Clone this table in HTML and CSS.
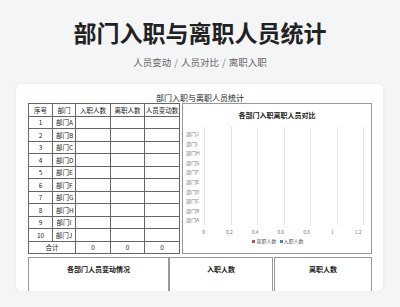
FILE: index.html
```html
<!DOCTYPE html>
<html lang="zh">
<head>
  <meta charset="UTF-8" />
  <title>部门入职与离职人员统计</title>
  <link rel="stylesheet" href="styles.css">
</head>
<body>

  <header class="top">
    <h1>部门入职与离职人员统计</h1>
    <div class="crumbs">
      <span>人员变动</span><span class="sep">/</span><span>人员对比</span><span class="sep">/</span><span>离职入职</span>
    </div>
  </header>

  <div class="card">
    <div class="caption">部门入职与离职人员统计</div>

    <div class="sheet">
      <table class="stats">
        <colgroup>
          <col style="width:24px"><col style="width:23px"><col style="width:35px"><col style="width:34px"><col style="width:35px">
        </colgroup>
        <tr><td>序号</td><td>部门</td><td>入职人数</td><td>离职人数</td><td>人员变动数</td></tr>
        <tr><td>1</td><td class="dept">部门A</td><td></td><td></td><td></td></tr>
        <tr><td>2</td><td class="dept">部门B</td><td></td><td></td><td></td></tr>
        <tr><td>3</td><td class="dept">部门C</td><td></td><td></td><td></td></tr>
        <tr><td>4</td><td class="dept">部门D</td><td></td><td></td><td></td></tr>
        <tr><td>5</td><td class="dept">部门E</td><td></td><td></td><td></td></tr>
        <tr><td>6</td><td class="dept">部门F</td><td></td><td></td><td></td></tr>
        <tr><td>7</td><td class="dept">部门G</td><td></td><td></td><td></td></tr>
        <tr><td>8</td><td class="dept">部门H</td><td></td><td></td><td></td></tr>
        <tr><td>9</td><td>部门I</td><td></td><td></td><td></td></tr>
        <tr><td>10</td><td>部门J</td><td></td><td></td><td></td></tr>
        <tr><td colspan="2">合计</td><td>0</td><td>0</td><td>0</td></tr>
      </table>

      <div class="chart">
        <div class="chart-title">各部门入职离职人员对比</div>
        <div class="plot">
          <div class="ylabels">
            <span>部门J</span><span>部门I</span><span>部门H</span><span>部门G</span><span>部门F</span>
            <span>部门E</span><span>部门D</span><span>部门C</span><span>部门B</span><span>部门A</span>
          </div>
          <div class="grid">
            <span></span><span></span><span></span><span></span><span></span><span></span>
          </div>
        </div>
        <div class="xlabels">
          <span>0</span><span>0.2</span><span>0.4</span><span>0.6</span><span>0.8</span><span>1</span><span>1.2</span>
        </div>
        <div class="legend">
          <i class="dot red"></i>离职人数 <i class="dot blue"></i>入职人数
        </div>
      </div>
    </div>

    <div class="bottom">
      <div class="box wide">各部门人员变动情况</div>
      <div class="box mid">入职人数</div>
      <div class="box last">离职人数</div>
    </div>
  </div>

</body>
</html>
```

FILE: styles.css
```css
body {
  margin: 0;
  background: #f4f5f7;
  font-family: 'Noto Sans CJK SC', 'Noto Sans', sans-serif;
  color: #222;
}
.top {
  text-align: center;
  padding-top: 17px;
}
h1 {
  margin: 0;
  font-size: 23px;
  line-height: 30px;
  font-weight: 700;
  color: #222;
}
.crumbs {
  margin-top: 8px;
  font-size: 9.5px;
  line-height: 14px;
  color: #666;
}
.crumbs .sep {
  margin: 0 3px;
  color: #888;
}
.card {
  margin: 15px 17px 0 16px;
  height: 207px;
  background: #fff;
  border-radius: 6px;
  box-shadow: 0 1px 4px rgba(0,0,0,0.07);
  padding: 8px 11px 0 12px;
  box-sizing: border-box;
  overflow: hidden;
}
.caption {
  text-align: center;
  font-size: 8px;
  line-height: 11px;
  color: #222;
}
.sheet {
  display: flex;
  gap: 2px;
  height: 151px;
}
.stats {
  border-collapse: collapse;
  table-layout: fixed;
  width: 151px;
  height: 151px;
  font-size: 6.5px;
  color: #222;
}
.stats td {
  border: 1px solid #666;
  text-align: center;
  padding: 0;
  height: 11px;
  line-height: 8px;
  white-space: nowrap;
  overflow: hidden;
}
.stats td.dept {
  text-align: left;
  padding-left: 3px;
}
.chart {
  width: 190px;
  border: 1px solid #999;
  box-sizing: border-box;
  display: flex;
  flex-direction: column;
}
.chart-title {
  margin-top: 6px;
  text-align: center;
  font-size: 7px;
  line-height: 10px;
  font-weight: 700;
}
.plot {
  display: flex;
  margin-top: 7px;
  height: 98px;
}
.ylabels {
  width: 21px;
  box-sizing: border-box;
  padding: 2px 0 0 3px;
  display: flex;
  flex-direction: column;
  font-size: 5px;
  color: #777;
}
.ylabels span {
  height: 9.6px;
  line-height: 9.6px;
}
.grid {
  display: flex;
}
.grid span {
  width: 26.5px;
  border-left: 1px solid #e2e2e2;
  box-sizing: border-box;
}
.grid span:last-child {
  border-right: 1px solid #e2e2e2;
  width: 27.5px;
}
.xlabels {
  display: flex;
  margin: 3px 0 0 7.75px;
  font-size: 5px;
  line-height: 8px;
  color: #777;
}
.xlabels span {
  width: 26.5px;
  text-align: center;
}
.legend {
  text-align: center;
  font-size: 5px;
  line-height: 7px;
  color: #555;
  margin-top: 1px;
}
.dot {
  display: inline-block;
  width: 3px;
  height: 3px;
  margin: 0 1px 0 2px;
}
.red { background: #c0504d; }
.blue { background: #4f81bd; }
.bottom {
  display: flex;
  margin-top: 3px;
  height: 60px;
}
.box {
  border: 1px solid #999;
  box-sizing: border-box;
  text-align: center;
  font-size: 7px;
  font-weight: 700;
  padding-top: 6px;
  line-height: 10px;
}
.box.wide { width: 141px; }
.box.mid { width: 104px; }
.box.last { width: 98px; margin-left: 1px; }
```
